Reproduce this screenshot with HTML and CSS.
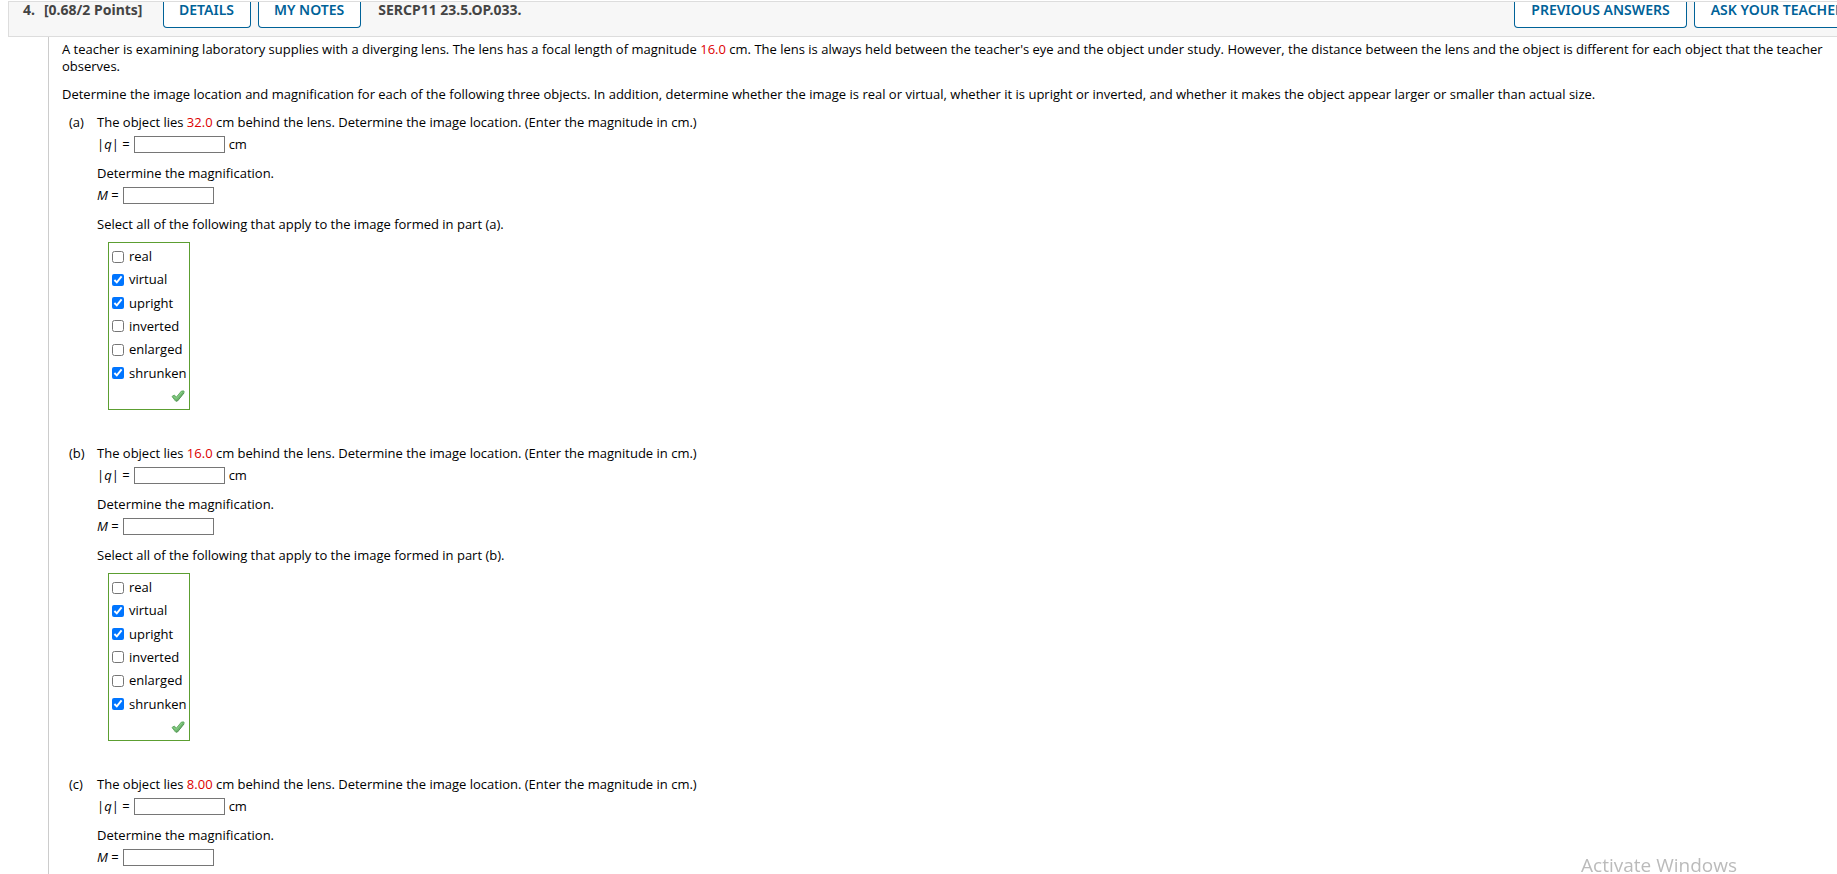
FILE: index.html
```html
<!DOCTYPE html>
<html lang="en">
    <head>
        <meta charset="utf-8">
        <title>SERCP11 23.5.OP.033.</title>
        <link rel="stylesheet" href="styles.css">
    </head>
    <body>
        <div class="header">
            <div class="points"><span>4.</span><span>[0.68/2 Points]</span></div>
            <button class="btn details">DETAILS</button>
            <button class="btn notes">MY NOTES</button>
            <span class="qname">SERCP11 23.5.OP.033.</span>
            <div class="actions">
                <button class="btn previous">PREVIOUS ANSWERS</button>
                <button class="btn">ASK YOUR TEACHER</button>
            </div>
        </div>

        <div class="question">
            <p>A teacher is examining laboratory supplies with a diverging lens. The lens has a focal length of magnitude <span class="red">16.0</span> cm. The lens is always held between the teacher's eye and the object under study. However, the distance between the lens and the object is different for each object that the teacher observes.</p>
            <p>Determine the image location and magnification for each of the following three objects. In addition, determine whether the image is real or virtual, whether it is upright or inverted, and whether it makes the object appear larger or smaller than actual size.</p>

            <div class="part">
                <div class="letter">(a)</div>
                <div class="body">
                    <div>The object lies <span class="red">32.0</span> cm behind the lens. Determine the image location. (Enter the magnitude in cm.)</div>
                    <div class="answer"><label for="qa">|<i>q</i>| =</label><input type="text" id="qa"><span>cm</span></div>
                    <div>Determine the magnification.</div>
                    <div class="answer"><label for="ma"><i>M</i> =</label><input type="text" id="ma"></div>
                    <div>Select all of the following that apply to the image formed in part (a).</div>
                    <div class="choices">
                        <label><input type="checkbox">real</label>
                        <label><input type="checkbox" checked>virtual</label>
                        <label><input type="checkbox" checked>upright</label>
                        <label><input type="checkbox">inverted</label>
                        <label><input type="checkbox">enlarged</label>
                        <label><input type="checkbox" checked>shrunken</label>
                        <svg class="correct" width="14" height="12" viewBox="0 0 14 12"><path d="M1 6.5L3.3 5l2 2.2L10.5 1H13v1.500L6 11H4.500z" fill="#6db96d" stroke="#69ad69" stroke-linejoin="round"/><path d="M2.500 6.500l2.800 2L11 2" fill="none" stroke="#8fd08d"/><path d="M5 11h1.500L13 3" fill="none" stroke="#579457"/></svg>
                    </div>
                </div>
            </div>

            <div class="part">
                <div class="letter">(b)</div>
                <div class="body">
                    <div>The object lies <span class="red">16.0</span> cm behind the lens. Determine the image location. (Enter the magnitude in cm.)</div>
                    <div class="answer"><label for="qb">|<i>q</i>| =</label><input type="text" id="qb"><span>cm</span></div>
                    <div>Determine the magnification.</div>
                    <div class="answer"><label for="mb"><i>M</i> =</label><input type="text" id="mb"></div>
                    <div>Select all of the following that apply to the image formed in part (b).</div>
                    <div class="choices">
                        <label><input type="checkbox">real</label>
                        <label><input type="checkbox" checked>virtual</label>
                        <label><input type="checkbox" checked>upright</label>
                        <label><input type="checkbox">inverted</label>
                        <label><input type="checkbox">enlarged</label>
                        <label><input type="checkbox" checked>shrunken</label>
                        <svg class="correct" width="14" height="12" viewBox="0 0 14 12"><path d="M1 6.5L3.3 5l2 2.2L10.5 1H13v1.500L6 11H4.500z" fill="#6db96d" stroke="#69ad69" stroke-linejoin="round"/><path d="M2.500 6.500l2.800 2L11 2" fill="none" stroke="#8fd08d"/><path d="M5 11h1.500L13 3" fill="none" stroke="#579457"/></svg>
                    </div>
                </div>
            </div>

            <div class="part">
                <div class="letter">(c)</div>
                <div class="body">
                    <div>The object lies <span class="red">8.00</span> cm behind the lens. Determine the image location. (Enter the magnitude in cm.)</div>
                    <div class="answer"><label for="qc">|<i>q</i>| =</label><input type="text" id="qc"><span>cm</span></div>
                    <div>Determine the magnification.</div>
                    <div class="answer"><label for="mc"><i>M</i> =</label><input type="text" id="mc"></div>
                </div>
            </div>
        </div>

        <div class="watermark">Activate Windows</div>
    </body>
</html>
```

FILE: styles.css
```css
* {
    box-sizing: border-box;
}

body {
    margin: 0;
    height: 100vh;
    overflow: hidden;
    font-family: "Open Sans", Verdana, sans-serif;
    font-size: 13px;
    line-height: 17px;
    color: #000;
    background-color: #fff;
}

/* Question bar */
.header {
    display: flex;
    align-items: flex-start;
    margin-top: 1px;
    margin-left: 8px;
    height: 36px;
    overflow: hidden;
    white-space: nowrap;
    border: 1px solid #ddd;
    border-right: none;
    background-color: #f7f7f7;
    font-family: "Noto Sans", sans-serif;
    font-size: 14px;
    font-weight: 700;
    line-height: 15px;
    color: #444;
}

.points {
    display: flex;
    gap: 9px;
    width: 154px;
    padding-left: 14px;
}

.btn {
    flex: none;
    height: 26px;
    padding: 0 16px 11px;
    border: 1px solid #006298;
    border-top: none;
    border-radius: 0 0 4px 4px;
    background-color: #fff;
    font-family: "Noto Sans", sans-serif;
    font-size: 14px;
    font-weight: 600;
    line-height: 15px;
    color: #006298;
}

.details,
.previous {
    margin-right: 7px;
}

.details,
.notes {
    padding-left: 15px;
}

.qname {
    margin-left: 17px;
}

.actions {
    display: flex;
    flex: none;
    margin-left: auto;
    margin-right: -24px;
}

/* Question text */
.question {
    margin-left: 48px;
    padding: 4px 8px 0 13px;
    border-left: 1px solid #ccc;
    min-height: 100vh;
}

p {
    margin: 0 0 11px;
}

.red {
    color: #d00;
}

.part {
    display: flex;
    margin-bottom: 35px;
}

.letter {
    width: 35px;
    padding-left: 7px;
}

.answer {
    display: flex;
    align-items: center;
    gap: 4px;
    margin: 5px 0 12px;
    height: 17px;
}

.answer input {
    width: 91px;
    height: 17px;
    padding: 0 2px;
    border: 1px solid #767676;
}

/* Graded choice list */
.choices {
    display: flex;
    flex-direction: column;
    justify-content: space-between;
    width: 82px;
    height: 168px;
    margin: 9px 0 0 11px;
    padding: 2px 4px 2px 3px;
    border: 1px solid #5c9e31;
}

.choices label {
    display: flex;
    align-items: center;
    height: 23px;
}

.choices input {
    flex: none;
    width: 12px;
    height: 12px;
    margin: 0 5px 0 0;
}

.correct {
    align-self: flex-end;
    margin: 5px 0;
}

.watermark {
    position: fixed;
    right: 100px;
    bottom: -4px;
    font-family: "Open Sans", sans-serif;
    font-size: 19px;
    line-height: 26px;
    color: #bbb;
}
```
